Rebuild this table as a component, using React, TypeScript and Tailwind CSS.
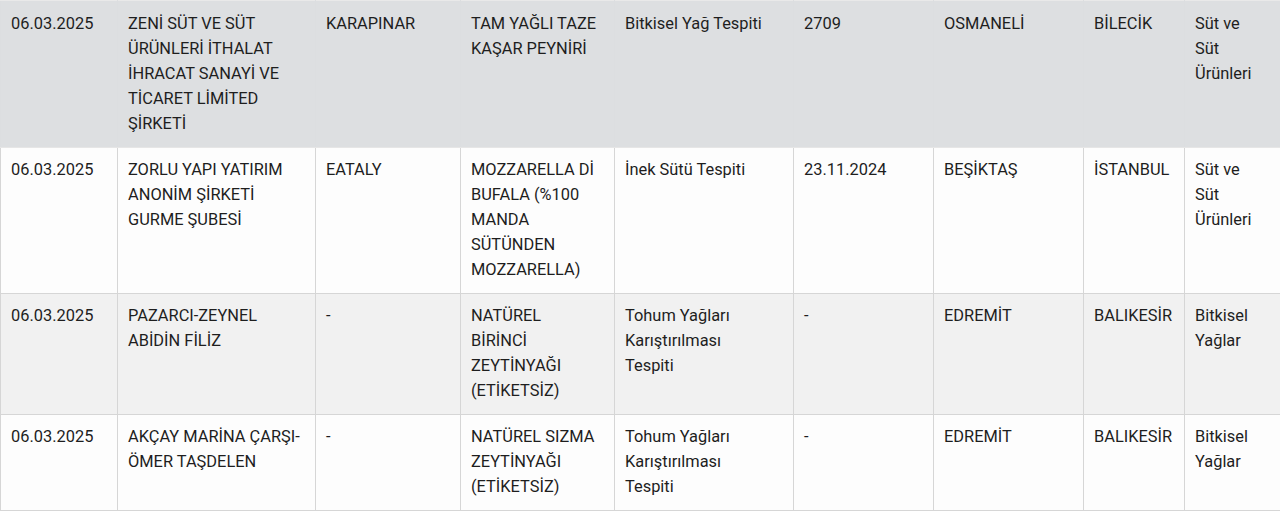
const widths = [117, 198, 145, 154, 179, 140, 150, 101, 96];

// each cell is a list of lines, broken the way the reference breaks them
const rows: { bg: string; cells: string[][] }[] = [
  {
    bg: "bg-[#dddfe1]",
    cells: [
      ["06.03.2025"],
      ["ZENİ SÜT VE SÜT", "ÜRÜNLERİ İTHALAT", "İHRACAT SANAYİ VE", "TİCARET LİMİTED", "ŞİRKETİ"],
      ["KARAPINAR"],
      ["TAM YAĞLI TAZE", "KAŞAR PEYNİRİ"],
      ["Bitkisel Yağ Tespiti"],
      ["2709"],
      ["OSMANELİ"],
      ["BİLECİK"],
      ["Süt ve", "Süt", "Ürünleri"],
    ],
  },
  {
    bg: "bg-[#fdfdfd]",
    cells: [
      ["06.03.2025"],
      ["ZORLU YAPI YATIRIM", "ANONİM ŞİRKETİ", "GURME ŞUBESİ"],
      ["EATALY"],
      ["MOZZARELLA Dİ", "BUFALA (%100", "MANDA", "SÜTÜNDEN", "MOZZARELLA)"],
      ["İnek Sütü Tespiti"],
      ["23.11.2024"],
      ["BEŞİKTAŞ"],
      ["İSTANBUL"],
      ["Süt ve", "Süt", "Ürünleri"],
    ],
  },
  {
    bg: "bg-[#f1f1f1]",
    cells: [
      ["06.03.2025"],
      ["PAZARCI-ZEYNEL", "ABİDİN FİLİZ"],
      ["-"],
      ["NATÜREL", "BİRİNCİ", "ZEYTİNYAĞI", "(ETİKETSİZ)"],
      ["Tohum Yağları", "Karıştırılması", "Tespiti"],
      ["-"],
      ["EDREMİT"],
      ["BALIKESİR"],
      ["Bitkisel", "Yağlar"],
    ],
  },
  {
    bg: "bg-[#fdfdfd]",
    cells: [
      ["06.03.2025"],
      ["AKÇAY MARİNA ÇARŞI-", "ÖMER TAŞDELEN"],
      ["-"],
      ["NATÜREL SIZMA", "ZEYTİNYAĞI", "(ETİKETSİZ)"],
      ["Tohum Yağları", "Karıştırılması", "Tespiti"],
      ["-"],
      ["EDREMİT"],
      ["BALIKESİR"],
      ["Bitkisel", "Yağlar"],
    ],
  },
];

export default function App() {
  return (
    <div className="w-[1280px] h-[512px] overflow-hidden bg-white font-['Roboto',sans-serif] text-[16.4px] leading-[25px] text-[#1e1e1e]">
      <table className="w-[1280px] table-fixed border-collapse">
        <colgroup>
          {widths.map((w, i) => (
            <col key={i} style={{ width: w }} />
          ))}
        </colgroup>
        <tbody>
          {rows.map((row, r) => (
            <tr key={r} className={row.bg}>
              {row.cells.map((lines, i) => (
                <td
                  key={i}
                  className={
                    r === 0
                      ? "align-top pl-[10px] pr-[4px] pt-[10px] pb-[11px] border border-[#dcdee0] border-t-[#e9e9e9] border-b-[#e6e6e6]"
                      : "align-top pl-[10px] pr-[4px] pt-[9px] pb-[11px] border border-[#d6d6d6]"
                  }
                >
                  {lines.map((l, k) => (
                    <div key={k} className="whitespace-nowrap">
                      {l}
                    </div>
                  ))}
                </td>
              ))}
            </tr>
          ))}
        </tbody>
      </table>
    </div>
  );
}
